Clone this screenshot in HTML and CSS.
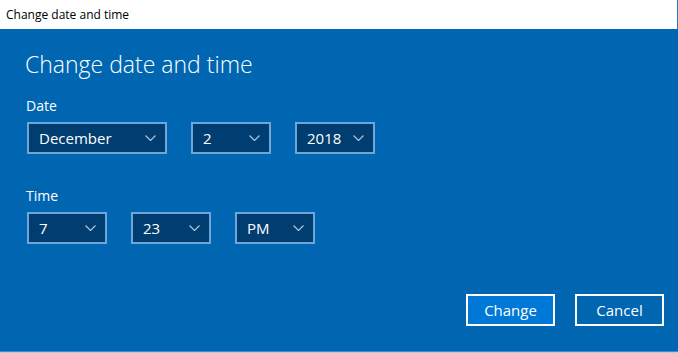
FILE: index.html
```html
<!DOCTYPE html>
<html lang="en">
  <head>
    <meta charset="UTF-8" />
    <meta name="viewport" content="width=device-width, initial-scale=1.0" />
    <title>Change date and time</title>
    <link rel="stylesheet" href="styles.css">
  </head>
  <body>
    <div class="window">
      <div class="titlebar">Change date and time</div>
      <div class="dialog">
        <h1>Change date and time</h1>

        <div class="field">
          <label>Date</label>
          <div class="row">
            <div class="select w-month">
              <span>December</span>
              <svg class="chevron" width="11" height="6" viewBox="0 0 11 6"><polyline points="0.5,0.5 5.5,5.5 10.5,0.5" /></svg>
            </div>
            <div class="select w-small">
              <span>2</span>
              <svg class="chevron" width="11" height="6" viewBox="0 0 11 6"><polyline points="0.5,0.5 5.5,5.5 10.5,0.5" /></svg>
            </div>
            <div class="select w-small">
              <span>2018</span>
              <svg class="chevron" width="11" height="6" viewBox="0 0 11 6"><polyline points="0.5,0.5 5.5,5.5 10.5,0.5" /></svg>
            </div>
          </div>
        </div>

        <div class="field">
          <label>Time</label>
          <div class="row">
            <div class="select w-small">
              <span>7</span>
              <svg class="chevron" width="11" height="6" viewBox="0 0 11 6"><polyline points="0.5,0.5 5.5,5.5 10.5,0.5" /></svg>
            </div>
            <div class="select w-small">
              <span>23</span>
              <svg class="chevron" width="11" height="6" viewBox="0 0 11 6"><polyline points="0.5,0.5 5.5,5.5 10.5,0.5" /></svg>
            </div>
            <div class="select w-small">
              <span>PM</span>
              <svg class="chevron" width="11" height="6" viewBox="0 0 11 6"><polyline points="0.5,0.5 5.5,5.5 10.5,0.5" /></svg>
            </div>
          </div>
        </div>

        <div class="actions">
          <button class="primary">Change</button>
          <button>Cancel</button>
        </div>
      </div>
      <div class="bottom-edge"></div>
    </div>
  </body>
</html>
```

FILE: styles.css
```css
* {
  box-sizing: border-box;
}

body {
  margin: 0;
  font-family: "Open Sans", "Noto Sans", sans-serif;
  background-color: #d4d4d4;
}

.window {
  width: 678px;
  height: 353px;
  display: flex;
  flex-direction: column;
}

.titlebar {
  height: 29px;
  line-height: 29px;
  padding-left: 6px;
  font-size: 12px;
  color: #000000;
  background-color: #ffffff;
  border-right: 1px solid #2a7bc4;
}

.dialog {
  flex: 1;
  display: flex;
  flex-direction: column;
  padding: 19px 14px 25px 27px;
  background-color: #0066b2;
  color: #ffffff;
}

h1 {
  margin: 0 0 16px -2px;
  font-size: 23px;
  line-height: 32px;
  font-weight: 300;
}

.field {
  margin-bottom: 32px;
}

.field label {
  display: block;
  font-size: 14px;
  line-height: 20px;
  margin-bottom: 6px;
  margin-left: -1px;
}

.row {
  display: flex;
  gap: 24px;
}

.select {
  height: 32px;
  display: flex;
  align-items: center;
  justify-content: space-between;
  padding: 0 9px 0 10px;
  border: 2px solid #6fa6da;
  background-color: #003d70;
  font-size: 15px;
}

.w-month {
  width: 140px;
}

.w-small {
  width: 80px;
}

.chevron {
  fill: none;
  stroke: #a9c6e2;
  stroke-width: 1.2;
}

.actions {
  margin-top: auto;
  display: flex;
  justify-content: flex-end;
  gap: 20px;
}

.actions button {
  width: 89px;
  height: 32px;
  border: 2px solid #ffffff;
  background-color: #0066b2;
  color: #ffffff;
  font-family: inherit;
  font-size: 15px;
  padding: 0;
}

.actions button.primary {
  background-color: #0078d7;
}

.bottom-edge {
  height: 2px;
  border-top: 1px solid #3d8bd0;
  background-color: #c8c8c8;
}
```
